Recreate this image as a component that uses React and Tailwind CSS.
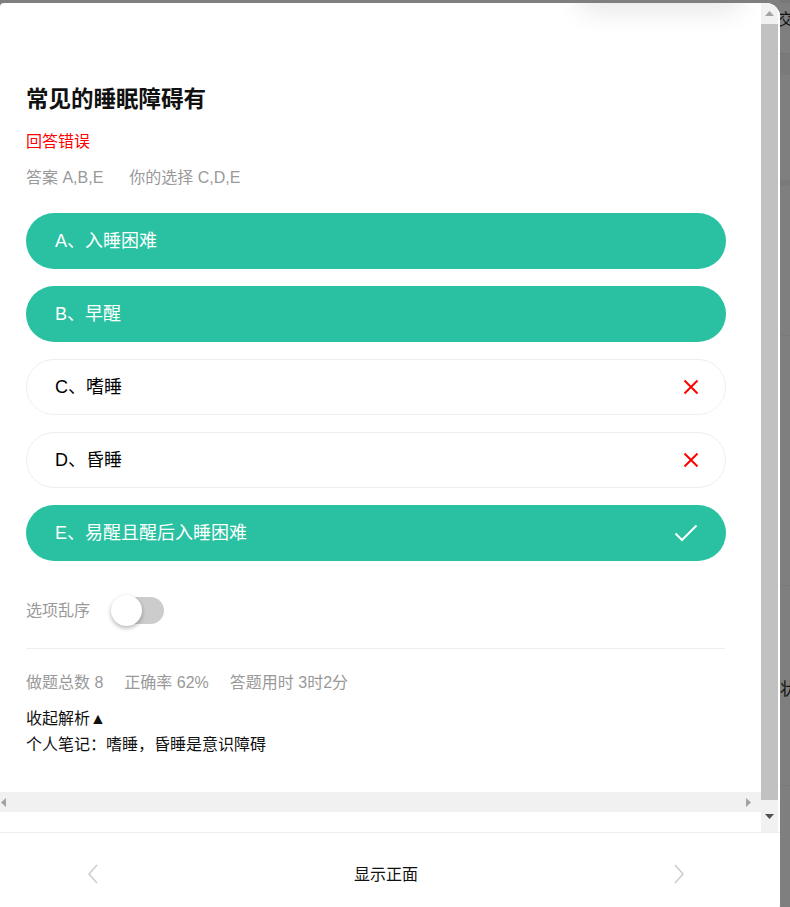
import React from "react";

const TEAL = "bg-[#29c1a1]";

function XIcon() {
  return (
    <svg width="16" height="16" viewBox="0 0 16 16" className="shrink-0">
      <path d="M1.5 1.5 L14.5 14.5 M14.5 1.5 L1.5 14.5" stroke="#ff0000" strokeWidth="2" fill="none" />
    </svg>
  );
}

function CheckIcon() {
  return (
    <svg width="24" height="18" viewBox="0 0 24 18" className="shrink-0">
      <path d="M1.5 9.5 L8 16 L22.5 1.5" stroke="#ffffff" strokeWidth="2" fill="none" />
    </svg>
  );
}

function Option({ label, selected, icon }) {
  return (
    <div
      className={
        selected
          ? `h-[56px] rounded-full ${TEAL} flex items-center justify-between pl-[29px] pr-[28px] text-white`
          : "h-[56px] rounded-full bg-white border border-[#eeeeee] flex items-center justify-between pl-[28px] pr-[26px] text-black"
      }
    >
      <span className="text-[18px] leading-[24px]">{label}</span>
      {icon === "x" && <XIcon />}
      {icon === "check" && <CheckIcon />}
    </div>
  );
}

export default function App() {
  return (
    <div className="w-[790px] h-[907px] bg-[#7f7f7f] relative overflow-hidden font-['Liberation_Sans','Noto_Sans_CJK_SC',sans-serif]">
      {/* background page peeking at the right */}
      <div className="absolute left-[780px] top-0 w-[10px] h-[907px] flex flex-col">
        <div className="h-[3px] bg-[#787878]" />
        <div className="h-[50px] relative">
          <span className="absolute left-[-2px] top-[6px] text-[16px] leading-[22px] text-[#111]">交</span>
        </div>
        <div className="h-[22px] bg-[#7a7a7a] border-t border-[#767676]" />
        <div className="h-[105px]" />
        <div className="h-[6px] bg-[#7a7a7a]" />
        <div className="h-[150px] border-b border-[#7a7a7a]" />
        <div className="h-[250px] border-b border-[#7a7a7a]" />
        <div className="h-[200px] relative border-b border-[#7a7a7a]">
          <span className="absolute left-[0px] top-[93px] text-[17px] leading-[22px] text-[#111]">状</span>
        </div>
      </div>

      {/* modal */}
      <div className="absolute left-0 top-[3px] w-[780px] h-[914px] bg-white rounded-tr-[14px] rounded-br-[12px] rounded-tl-[4px] overflow-hidden flex flex-col">
        {/* faint shadow at top */}
        <div className="absolute left-[590px] top-[-12px] w-[140px] h-[10px] rounded-full shadow-[0_0_26px_12px_rgba(0,0,0,0.09)]" />

        <div className="h-[829px] flex shrink-0">
          {/* content column */}
          <div className="w-[761px] flex flex-col">
            <div className="h-[789px] overflow-hidden pl-[26px] pr-[35px] pt-[82px] flex flex-col">
              <div className="text-[22.5px] leading-[30px] font-bold text-[#111]">常见的睡眠障碍有</div>
              <div className="mt-[15px] text-[16px] leading-[24px] text-[#ff0000]">回答错误</div>
              <div className="mt-[13px] text-[16px] leading-[22px] text-[#999999] flex">
                <span className="mr-[26px]">答案 A,B,E</span>
                <span>你的选择 C,D,E</span>
              </div>

              <div className="mt-[24px] flex flex-col gap-[17px]">
                <Option label="A、入睡困难" selected />
                <Option label="B、早醒" selected />
                <Option label="C、嗜睡" icon="x" />
                <Option label="D、昏睡" icon="x" />
                <Option label="E、易醒且醒后入睡困难" selected icon="check" />
              </div>

              <div className="mt-[34px] flex items-center">
                <span className="text-[16px] leading-[22px] text-[#999999]">选项乱序</span>
                <div className="ml-[21px] relative w-[53px] h-[31px] flex items-center">
                  <div className="ml-[8px] w-[45px] h-[27px] rounded-full bg-[#cccccc]" />
                  <div className="absolute left-0 top-0 w-[31px] h-[31px] rounded-full bg-white shadow-[0_2px_4px_rgba(0,0,0,0.3)]" />
                </div>
              </div>

              <div className="mt-[22px] h-px bg-[#eeeeee] w-[699px]" />

              <div className="mt-[23px] flex text-[16px] leading-[22px] text-[#999999]">
                <span className="mr-[21px]">做题总数 8</span>
                <span className="mr-[21px]">正确率 62%</span>
                <span>答题用时 3时2分</span>
              </div>
              <div className="mt-[14px] text-[16px] leading-[22px] text-[#111]">收起解析▲</div>
              <div className="mt-[4px] text-[16px] leading-[22px] text-[#111]">个人笔记：嗜睡，昏睡是意识障碍</div>
            </div>
            {/* horizontal scrollbar */}
            <div className="h-[20px] bg-[#f1f1f1] flex items-center justify-between px-[1px]">
              <svg width="5" height="9" viewBox="0 0 5 9"><path d="M5 0 L0 4.5 L5 9 Z" fill="#a3a3a3" /></svg>
              <svg width="5" height="9" viewBox="0 0 5 9" className="mr-[9px]"><path d="M0 0 L5 4.5 L0 9 Z" fill="#a3a3a3" /></svg>
            </div>
            <div className="h-[20px] bg-white" />
          </div>

          {/* vertical scrollbar */}
          <div className="w-[17px] bg-[#f1f1f1] flex flex-col items-stretch">
            <div className="h-[21px] flex items-center justify-center">
              <svg width="9" height="5" viewBox="0 0 9 5"><path d="M0 5 L4.5 0 L9 5 Z" fill="#a3a3a3" /></svg>
            </div>
            <div className="h-[776px] bg-[#c1c1c1]" />
            <div className="flex-1 flex items-center justify-center">
              <svg width="9" height="5" viewBox="0 0 9 5"><path d="M0 0 L4.5 5 L9 0 Z" fill="#505050" /></svg>
            </div>
          </div>
          <div className="w-[2px] bg-white" />
        </div>

        {/* footer */}
        <div className="h-[85px] border-t border-[#eeeeee] flex items-start pt-[31px] justify-between">
          <svg width="12" height="20" viewBox="0 0 12 20" className="ml-[87px] mt-[0px]">
            <path d="M10 1 L2 10 L10 19" stroke="#cccccc" strokeWidth="1.5" fill="none" />
          </svg>
          <span className="text-[16px] leading-[22px] text-[#111]">显示正面</span>
          <svg width="12" height="20" viewBox="0 0 12 20" className="mr-[95px] mt-[0px]">
            <path d="M2 1 L10 10 L2 19" stroke="#cccccc" strokeWidth="1.5" fill="none" />
          </svg>
        </div>
      </div>
    </div>
  );
}
